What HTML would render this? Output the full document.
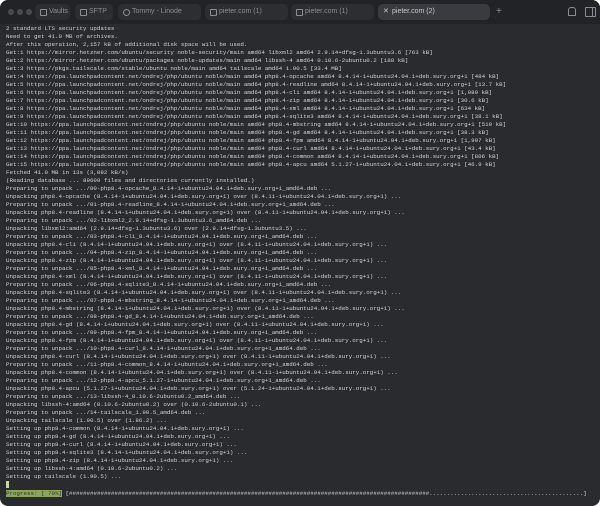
<!DOCTYPE html>
<html><head><meta charset="utf-8"><style>
html,body{margin:0;padding:0;background:#fff;}
.win{position:absolute;left:0;top:0;width:600px;height:506px;background:#2a2b2f;border-radius:8px;overflow:hidden;}
.bar{position:absolute;left:0;top:0;width:600px;height:24px;background:#222326;}
.dot{position:absolute;top:9px;width:6px;height:6px;border-radius:50%;background:#4a4b4f;}
.tab{position:absolute;top:4px;height:16px;border-radius:5px;background:#2d2e32;color:#8c8d91;font:7px "Liberation Sans",sans-serif;line-height:16px;box-sizing:border-box;padding-left:14px;white-space:nowrap;}
.tab i{position:absolute;left:5px;top:5px;width:5px;height:5px;border:1px solid #8c8d91;border-radius:1px;}
.tab.act{background:#3a3b40;color:#c8c9cc;}
pre{position:absolute;left:6px;top:24.5px;margin:0;font:5.83px/8px "Liberation Mono",monospace;color:#d2d3d5;white-space:pre;}
.prog{background:#8ea55e;color:#2a3a1a;}
.cur{display:inline-block;width:3px;height:7px;background:#c8d8a0;vertical-align:-1px;}
</style></head><body><div class="win">
<div class="bar">
<div class="dot" style="left:8px"></div><div class="dot" style="left:17px"></div><div class="dot" style="left:26px"></div>
<div class="tab" style="left:35px;width:35px"><i></i>Vaults</div>
<div class="tab" style="left:75px;width:38px"><i></i>SFTP</div>
<div class="tab" style="left:118px;width:83px"><i style="border-radius:50%"></i>Tommy - Linode</div>
<div class="tab" style="left:205px;width:83px"><i></i>pieter.com (1)</div>
<div class="tab" style="left:291px;width:83px"><i></i>pieter.com (1)</div>
<div class="tab act" style="left:378px;width:112px;padding-left:14px"><span style="position:absolute;left:5px;top:0">✕</span>pieter.com (2)</div>
<div style="position:absolute;left:496px;top:4px;color:#8c8d91;font:10px 'Liberation Sans',sans-serif;line-height:16px">+</div>
<div style="position:absolute;left:568px;top:7px;width:6px;height:7px;border:1px solid #8c8d91;border-radius:3px 3px 0 0"></div>
<div style="position:absolute;left:585px;top:7px;width:9px;height:8px;border:1px solid #8c8d91;border-radius:1px"><div style="position:absolute;right:2px;top:0;width:1px;height:8px;background:#8c8d91"></div></div>
</div>
<pre>2 standard LTS security updates
Need to get 41.0 MB of archives.
After this operation, 2,157 kB of additional disk space will be used.
Get:1 https://mirror.hetzner.com/ubuntu/security noble-security/main amd64 libxml2 amd64 2.9.14+dfsg-1.3ubuntu3.6 [763 kB]
Get:2 https://mirror.hetzner.com/ubuntu/packages noble-updates/main amd64 libssh-4 amd64 0.10.6-2ubuntu0.2 [188 kB]
Get:3 https://pkgs.tailscale.com/stable/ubuntu noble/main amd64 tailscale amd64 1.90.5 [33.4 MB]
Get:4 https://ppa.launchpadcontent.net/ondrej/php/ubuntu noble/main amd64 php8.4-opcache amd64 8.4.14-1+ubuntu24.04.1+deb.sury.org+1 [484 kB]
Get:5 https://ppa.launchpadcontent.net/ondrej/php/ubuntu noble/main amd64 php8.4-readline amd64 8.4.14-1+ubuntu24.04.1+deb.sury.org+1 [13.7 kB]
Get:6 https://ppa.launchpadcontent.net/ondrej/php/ubuntu noble/main amd64 php8.4-cli amd64 8.4.14-1+ubuntu24.04.1+deb.sury.org+1 [1,989 kB]
Get:7 https://ppa.launchpadcontent.net/ondrej/php/ubuntu noble/main amd64 php8.4-zip amd64 8.4.14-1+ubuntu24.04.1+deb.sury.org+1 [30.6 kB]
Get:8 https://ppa.launchpadcontent.net/ondrej/php/ubuntu noble/main amd64 php8.4-xml amd64 8.4.14-1+ubuntu24.04.1+deb.sury.org+1 [634 kB]
Get:9 https://ppa.launchpadcontent.net/ondrej/php/ubuntu noble/main amd64 php8.4-sqlite3 amd64 8.4.14-1+ubuntu24.04.1+deb.sury.org+1 [38.1 kB]
Get:10 https://ppa.launchpadcontent.net/ondrej/php/ubuntu noble/main amd64 php8.4-mbstring amd64 8.4.14-1+ubuntu24.04.1+deb.sury.org+1 [519 kB]
Get:11 https://ppa.launchpadcontent.net/ondrej/php/ubuntu noble/main amd64 php8.4-gd amd64 8.4.14-1+ubuntu24.04.1+deb.sury.org+1 [38.3 kB]
Get:12 https://ppa.launchpadcontent.net/ondrej/php/ubuntu noble/main amd64 php8.4-fpm amd64 8.4.14-1+ubuntu24.04.1+deb.sury.org+1 [1,997 kB]
Get:13 https://ppa.launchpadcontent.net/ondrej/php/ubuntu noble/main amd64 php8.4-curl amd64 8.4.14-1+ubuntu24.04.1+deb.sury.org+1 [43.4 kB]
Get:14 https://ppa.launchpadcontent.net/ondrej/php/ubuntu noble/main amd64 php8.4-common amd64 8.4.14-1+ubuntu24.04.1+deb.sury.org+1 [806 kB]
Get:15 https://ppa.launchpadcontent.net/ondrej/php/ubuntu noble/main amd64 php8.4-apcu amd64 5.1.27-1+ubuntu24.04.1+deb.sury.org+1 [46.9 kB]
Fetched 41.0 MB in 13s (3,092 kB/s)
(Reading database ... 89609 files and directories currently installed.)
Preparing to unpack .../00-php8.4-opcache_8.4.14-1+ubuntu24.04.1+deb.sury.org+1_amd64.deb ...
Unpacking php8.4-opcache (8.4.14-1+ubuntu24.04.1+deb.sury.org+1) over (8.4.11-1+ubuntu24.04.1+deb.sury.org+1) ...
Preparing to unpack .../01-php8.4-readline_8.4.14-1+ubuntu24.04.1+deb.sury.org+1_amd64.deb ...
Unpacking php8.4-readline (8.4.14-1+ubuntu24.04.1+deb.sury.org+1) over (8.4.11-1+ubuntu24.04.1+deb.sury.org+1) ...
Preparing to unpack .../02-libxml2_2.9.14+dfsg-1.3ubuntu3.6_amd64.deb ...
Unpacking libxml2:amd64 (2.9.14+dfsg-1.3ubuntu3.6) over (2.9.14+dfsg-1.3ubuntu3.5) ...
Preparing to unpack .../03-php8.4-cli_8.4.14-1+ubuntu24.04.1+deb.sury.org+1_amd64.deb ...
Unpacking php8.4-cli (8.4.14-1+ubuntu24.04.1+deb.sury.org+1) over (8.4.11-1+ubuntu24.04.1+deb.sury.org+1) ...
Preparing to unpack .../04-php8.4-zip_8.4.14-1+ubuntu24.04.1+deb.sury.org+1_amd64.deb ...
Unpacking php8.4-zip (8.4.14-1+ubuntu24.04.1+deb.sury.org+1) over (8.4.11-1+ubuntu24.04.1+deb.sury.org+1) ...
Preparing to unpack .../05-php8.4-xml_8.4.14-1+ubuntu24.04.1+deb.sury.org+1_amd64.deb ...
Unpacking php8.4-xml (8.4.14-1+ubuntu24.04.1+deb.sury.org+1) over (8.4.11-1+ubuntu24.04.1+deb.sury.org+1) ...
Preparing to unpack .../06-php8.4-sqlite3_8.4.14-1+ubuntu24.04.1+deb.sury.org+1_amd64.deb ...
Unpacking php8.4-sqlite3 (8.4.14-1+ubuntu24.04.1+deb.sury.org+1) over (8.4.11-1+ubuntu24.04.1+deb.sury.org+1) ...
Preparing to unpack .../07-php8.4-mbstring_8.4.14-1+ubuntu24.04.1+deb.sury.org+1_amd64.deb ...
Unpacking php8.4-mbstring (8.4.14-1+ubuntu24.04.1+deb.sury.org+1) over (8.4.11-1+ubuntu24.04.1+deb.sury.org+1) ...
Preparing to unpack .../08-php8.4-gd_8.4.14-1+ubuntu24.04.1+deb.sury.org+1_amd64.deb ...
Unpacking php8.4-gd (8.4.14-1+ubuntu24.04.1+deb.sury.org+1) over (8.4.11-1+ubuntu24.04.1+deb.sury.org+1) ...
Preparing to unpack .../09-php8.4-fpm_8.4.14-1+ubuntu24.04.1+deb.sury.org+1_amd64.deb ...
Unpacking php8.4-fpm (8.4.14-1+ubuntu24.04.1+deb.sury.org+1) over (8.4.11-1+ubuntu24.04.1+deb.sury.org+1) ...
Preparing to unpack .../10-php8.4-curl_8.4.14-1+ubuntu24.04.1+deb.sury.org+1_amd64.deb ...
Unpacking php8.4-curl (8.4.14-1+ubuntu24.04.1+deb.sury.org+1) over (8.4.11-1+ubuntu24.04.1+deb.sury.org+1) ...
Preparing to unpack .../11-php8.4-common_8.4.14-1+ubuntu24.04.1+deb.sury.org+1_amd64.deb ...
Unpacking php8.4-common (8.4.14-1+ubuntu24.04.1+deb.sury.org+1) over (8.4.11-1+ubuntu24.04.1+deb.sury.org+1) ...
Preparing to unpack .../12-php8.4-apcu_5.1.27-1+ubuntu24.04.1+deb.sury.org+1_amd64.deb ...
Unpacking php8.4-apcu (5.1.27-1+ubuntu24.04.1+deb.sury.org+1) over (5.1.24-1+ubuntu24.04.1+deb.sury.org+1) ...
Preparing to unpack .../13-libssh-4_0.10.6-2ubuntu0.2_amd64.deb ...
Unpacking libssh-4:amd64 (0.10.6-2ubuntu0.2) over (0.10.6-2ubuntu0.1) ...
Preparing to unpack .../14-tailscale_1.90.5_amd64.deb ...
Unpacking tailscale (1.90.5) over (1.86.2) ...
Setting up php8.4-common (8.4.14-1+ubuntu24.04.1+deb.sury.org+1) ...
Setting up php8.4-gd (8.4.14-1+ubuntu24.04.1+deb.sury.org+1) ...
Setting up php8.4-curl (8.4.14-1+ubuntu24.04.1+deb.sury.org+1) ...
Setting up php8.4-sqlite3 (8.4.14-1+ubuntu24.04.1+deb.sury.org+1) ...
Setting up php8.4-zip (8.4.14-1+ubuntu24.04.1+deb.sury.org+1) ...
Setting up libssh-4:amd64 (0.10.6-2ubuntu0.2) ...
Setting up tailscale (1.90.5) ...
<span class="cur"></span>
<span class="prog">Progress: [ 70%]</span> [#######################################################################################################............................................]</pre>
</div></body></html>
